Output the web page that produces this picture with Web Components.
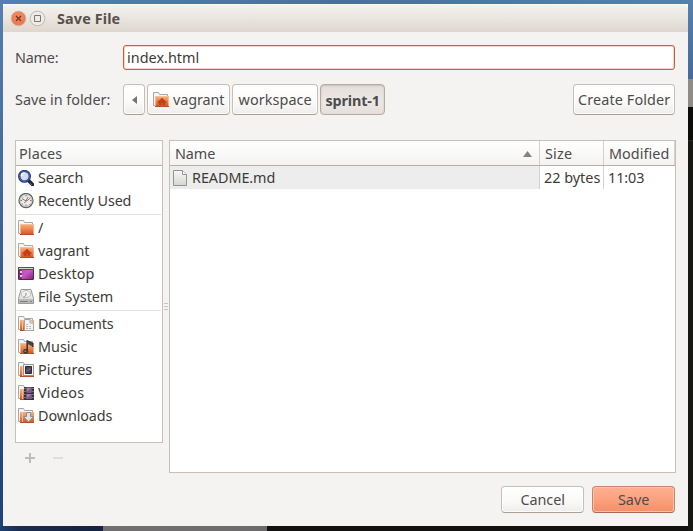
<!DOCTYPE html>
<html lang="en">
<head>
<meta charset="utf-8">
<title>Save File</title>
<style>
html,body{margin:0;width:693px;height:531px;overflow:hidden}
body{font:14.4px/22px "Noto Sans","Open Sans",sans-serif;color:#3c3b37}
</style>
</head>
<body>
<save-dialog></save-dialog>
<script>
const define = (name, html, setup) => {
  const tpl = document.createElement('template');
  tpl.innerHTML = html;
  customElements.define(name, class extends HTMLElement {
    connectedCallback() {
      if (this.shadowRoot) return;
      this.attachShadow({mode: 'open'}).append(tpl.content.cloneNode(true));
      if (setup) setup(this);
    }
  });
};

/* 16px icons */
const folderBack = '<path d="M.5 13.500V.5h5l1 2h8v11z" fill="#f7f6f4" stroke="#aaa8a4"/>';
const folder = folderBack + '<path d="M2 4h14v11H2z" fill="url(#o)"/><path d="M2.500 14V4.500h13V14" fill="none" stroke="#f8c59f" stroke-opacity=".75"/><path d="M2 14.500h14" stroke="#b5502f"/>';
const half = folderBack + '<path d="M2 4h14v11H2z" fill="url(#o)"/><path d="M4.500 4v10" stroke="#f9c39d"/><path d="M2 14.500h14" stroke="#b5502f"/>';
const icons = {
  folder,
  home: folder + '<path d="M9 6l-4.500 4 .8 1 .7-.5V13h2.300v-2h1.500v2H12v-2.500l.7.500.8-1z" fill="#c4401c" stroke="#c4401c" stroke-width=".5"/>',
  search: '<path d="M10.500 10.500l4 4" stroke="#222641" stroke-width="3.500" stroke-linecap="round"/><path d="M12.500 13.500l1 1" stroke="#8b93a8"/><circle cx="6.500" cy="6.300" r="5.300" fill="#d5dce8" stroke="#20377c" stroke-width="2.400"/><circle cx="6.500" cy="6.300" r="5.200" fill="none" stroke="#4e6fbd" stroke-width=".8"/><path d="M3.500 6a3 3 0 0 1 3-3" fill="none" stroke="#fff" stroke-width="1.500"/>',
  recent: '<circle cx="8" cy="7.500" r="7" fill="#eceeea" stroke="#62635f" stroke-width="1.300"/><circle cx="8" cy="7.500" r="5.800" fill="none" stroke="#c3c5bf"/><path d="M8 2v1.500M8 11.500V13M2.500 7.500H4M12 7.500h1.500M4.200 3.700l.8.800M11.500 11l.8.800M4.200 11.300l.8-.8" stroke="#777"/><path d="M3.800 5.500L8 8l2-4" fill="none" stroke="#6b6d69" stroke-width=".9"/><path d="M6 10l6.500-5" stroke="#d94f44" stroke-width=".9"/>',
  desktop: '<rect x=".5" y="1.500" width="15" height="12" rx=".5" fill="url(#p)" stroke="#562650"/><path d="M0 1h16v3H0z" fill="#55544a"/><path d="M1 2h14v1H1z" fill="#d8d9c4"/><path d="M1 4h3v9H1z" fill="#7c3172"/><path d="M2 5h2v2H2zM2 9h2v2H2z" fill="#e8c7e4"/>',
  disk: '<path d="M3 .5h10l2.500 9v5H.5v-5z" fill="url(#g)" stroke="#999b97"/><ellipse cx="8" cy="5" rx="4.800" ry="3.500" fill="#f2f2f1" stroke="#bcbdb9"/><circle cx="8" cy="5" r="1" fill="#aaa"/><path d="M8 6L5.500 9" stroke="#9c9e9a"/><path d="M1 10h14v4H1z" fill="#bbbcb9"/><path d="M2 12.500h8M12 12.500h2" stroke="#7d7e7b"/>',
  documents: half + '<path d="M6.500 3.500h5.500l3.500 3.500v7.500h-9z" fill="#f3f3f2" stroke="#a3a5a1"/><path d="M12 3.500V7h3.500" fill="#ddd" stroke="#aaa"/><path d="M8 8.500h3M8 10.500h6M8 12.500h5" stroke="#bbb" stroke-dasharray="2 1"/>',
  music: folder + '<path d="M9.200 12V2l5.500 2.500V8" fill="none" stroke="#333532" stroke-width="1.500"/><path d="M9.500 2.500v2.500l5 2.500v-3z" fill="#454743"/><ellipse cx="7.700" cy="12.400" rx="2.500" ry="2.300" fill="#353733"/><circle cx="7.400" cy="12.200" r="1" fill="#8b8d88"/>',
  pictures: half + '<path d="M5.500 2.500h10v11h-10z" fill="#f3f3f1" stroke="#96988f"/><path d="M7.500 4.500h6v7h-6z" fill="#493f58" stroke="#2c2936"/><path d="M8 8l5-3v3l-5 2z" fill="#665776"/>',
  videos: half + '<path d="M6 2h10v13H6z" fill="#38333b"/><path d="M8.500 2.500h5v5h-5zM8.500 9h5v5h-5z" fill="#a381b2"/><path d="M9 6.500l4-3.500v4.500H9zM9 13l4-3.500V14H9z" fill="#7d598b"/><path d="M7 3v12M15 3v12" stroke="#bdb5bd" stroke-dasharray="1 2"/>',
  downloads: half + '<path d="M8.500 4.500h4v4h3l-5 5.500-5-5.500h3z" fill="#e2e3e0" stroke="#8d8f89"/>',
  file: '<path d="M1.500.5h9l4 4v11h-13z" fill="url(#g)" stroke="#929490"/><path d="M10.500.5v4h4" fill="#fafafa" stroke="#929490"/>'
};
define('pixel-icon', `<style>:host{display:block;flex:none;width:16px;height:16px}svg{display:block}</style>
<svg width="16" height="16" viewBox="0 0 16 16"><defs>
<linearGradient id="o" x2="0" y2="1"><stop stop-color="#f3b486"/><stop offset=".45" stop-color="#ee8650"/><stop offset="1" stop-color="#d44d1c"/></linearGradient>
<linearGradient id="p" x2="1" y2="1"><stop stop-color="#a444a0"/><stop offset=".5" stop-color="#c95bc4"/><stop offset="1" stop-color="#7c2378"/></linearGradient>
<linearGradient id="g" x2="0" y2="1"><stop stop-color="#f7f7f7"/><stop offset="1" stop-color="#d6d6d5"/></linearGradient></defs><g></g></svg>`,
  el => { el.shadowRoot.querySelector('g').innerHTML = icons[el.getAttribute('name')]; });

/* Text set to a fixed measure by adjusting the tracking */
define('fit-text', `<style>:host{display:block;flex:none;white-space:nowrap}span{display:inline-block}</style><span></span>`,
  el => {
    const span = el.shadowRoot.querySelector('span');
    const text = el.getAttribute('text'), w = +el.getAttribute('w');
    span.textContent = text;
    el.style.width = w + 'px';
    const natural = span.getBoundingClientRect().width;
    if (natural) span.style.letterSpacing = ((w + .3 - natural) / text.length) + 'px';
  });

define('push-button', `<style>
:host{display:flex;box-sizing:border-box;align-items:center;justify-content:center;gap:4px;height:31px;border:1px solid #c6beb7;border-bottom-color:#a89f96;border-radius:4px;background:linear-gradient(#fff,#fbfaf9 55%,#efedeb);box-shadow:inset 0 0 0 1px #fffc;color:#4c4c4c}
:host([active]){background:linear-gradient(#e5dfda,#ece8e4 60%,#e5dfda);border-color:#b5aba3;box-shadow:inset 0 1px 2px #c9c0b9;font-weight:700;padding-top:2px}
:host([action]){height:27px}
:host([primary]){background:linear-gradient(#ffb090,#fba17d 50%,#f58e68);border-color:#c98468;border-bottom-color:#a76b53;box-shadow:inset 0 0 0 1px #ffc1a6}
</style><slot></slot>`);

define('title-bar', `<style>
:host{display:flex;align-items:center;box-sizing:border-box;height:28px;padding:1px 0 0 7px;gap:2px;border-radius:5px 5px 0 0;background:linear-gradient(#f5f3f0,#ebe7e1 45%,#dfd6ce);box-shadow:inset 0 1px #faf9f7;font-weight:700;color:#57504a}
svg{display:block;flex:none}fit-text{margin-left:9px}
</style>
<svg width="17" height="17" viewBox="0 0 17 17"><circle cx="8.500" cy="8.500" r="7.300" fill="#f0774b" stroke="#c8bbb1"/><circle cx="8.500" cy="7" r="5.500" fill="#f69068" opacity=".5"/><path d="M6 6l5 5M11 6l-5 5" stroke="#6b392a" stroke-width="1.300"/></svg>
<svg width="17" height="17" viewBox="0 0 17 17"><circle cx="8.500" cy="8.500" r="7.300" fill="#efebe6" stroke="#beb8b1"/><path d="M5.500 5.500h6v6h-6z" fill="none" stroke="#7d7771"/></svg>
<fit-text text="Save File" w="63"></fit-text>`);

define('place-item', `<style>:host{display:flex;align-items:center;height:23px;padding-left:2px;gap:4px}</style><pixel-icon></pixel-icon><fit-text></fit-text>`,
  el => {
    const r = el.shadowRoot;
    const ic = document.createElement('pixel-icon');
    ic.setAttribute('name', el.getAttribute('icon'));
    const t = document.createElement('fit-text');
    t.setAttribute('text', el.getAttribute('label'));
    t.setAttribute('w', el.getAttribute('w'));
    r.querySelector('pixel-icon').replaceWith(ic);
    r.querySelector('fit-text').replaceWith(t);
  });

define('places-panel', `<style>
:host{display:block;box-sizing:border-box;width:148px;height:303px;border:1px solid #c8c0b8;background:#fff}
header{height:22px;border-bottom:1px solid #b8aea4;background:linear-gradient(#fff,#f4f3f1);padding:2px 0 0 3px;color:#4c4c4c}
hr{border:0;margin:2px 1px 1px;height:1px;background:#e4e1de}
</style>
<header><fit-text text="Places" w="43"></fit-text></header>
<place-item icon="search" label="Search" w="45"></place-item>
<place-item icon="recent" label="Recently Used" w="93"></place-item><hr>
<place-item icon="folder" label="/" w="6"></place-item>
<place-item icon="home" label="vagrant" w="51"></place-item>
<place-item icon="desktop" label="Desktop" w="56"></place-item>
<place-item icon="disk" label="File System" w="75"></place-item><hr>
<place-item icon="documents" label="Documents" w="75"></place-item>
<place-item icon="music" label="Music" w="39"></place-item>
<place-item icon="pictures" label="Pictures" w="54"></place-item>
<place-item icon="videos" label="Videos" w="46"></place-item>
<place-item icon="downloads" label="Downloads" w="74"></place-item>`);

define('file-list', `<style>
:host{display:block;box-sizing:border-box;width:507px;height:333px;border:1px solid #c8c0b8;background:#fff}
.row{display:grid;grid-template-columns:370px 64px 71px;height:23px}
.row>div{display:flex;align-items:center;box-sizing:border-box;border-right:1px solid #d5d0cb;padding-left:4px}
.row>div:first-child{padding-left:2px;gap:4px;background:#ededed}
.row>div:last-child{border:0}
.row.head{height:24px;border-bottom:1px solid #b8aea4;background:linear-gradient(#fff,#f4f3f1);color:#4c4c4c}
.row.head>div{padding:2px 0 0 5px}
.row.head>div:first-child{background:none;padding:2px 7px 0 5px;justify-content:space-between}
.row.head>div:last-child{border-right:1px solid #d5d0cb}
</style>
<div class="row head"><div><fit-text text="Name" w="40"></fit-text><svg width="9" height="6"><path d="M4.500 0L9 6H0z" fill="#85827e"/></svg></div><div><fit-text text="Size" w="27"></fit-text></div><div><fit-text text="Modified" w="60"></fit-text></div></div>
<div class="row"><div><pixel-icon name="file"></pixel-icon><fit-text text="README.md" w="83"></fit-text></div><div><fit-text text="22 bytes" w="56"></fit-text></div><div><fit-text text="11:03" w="36"></fit-text></div></div>`);

define('save-dialog', `<style>
:host{display:grid;box-sizing:border-box;grid-template:4px 522px 5px / 3px 685px 5px;width:693px;height:531px;
background:linear-gradient(90deg,#1f4072,#1a2c50 20px,#15223f 103px,#716f6f 103px,#6c6a6a 267px,#12110f 267px) 0 526px/688px 5px no-repeat,
linear-gradient(90deg,#547fb2,#49719f 50%,#5581b1) 0 0/100% 4px no-repeat,
linear-gradient(#5580b2,#3e659a 40%,#254981 75%,#1f427a) 0 0/3px 100% no-repeat,
linear-gradient(#5581b1,#446a98 79px,#8f8c88 79px,#8f8c88 107px,#0c0c0b 107px,#0c0c0b 140px,#2a2a27 140px,#171813 142px) 688px 0/5px 100% no-repeat}
.win{grid-area:2/2;display:flex;flex-direction:column;background:#f5f3f2;border-radius:5px 5px 0 0;color:#3c3b37}
.body{flex:1;padding:13px 13px 13px 12px;display:flex;flex-direction:column}
.line{display:grid;grid-template-columns:108px 1fr;align-items:center;color:#4c4c4c}
.entry{display:flex;align-items:center;box-sizing:border-box;height:25px;border:1px solid #c95e38;border-radius:3px;background:#fff;box-shadow:inset 0 0 0 1px #f9d3c5;padding-left:3px;color:#3c3b37}
.folders{margin-top:14px}.path{display:flex;gap:2px}.path push-button:last-child{margin-left:auto}
.panels{display:flex;margin-top:25px;width:661px;height:333px}
.left{display:flex;flex-direction:column}
.tools{display:flex;padding:10px 0 0 10px;gap:18px}
.grip{width:6px;height:333px;display:flex;flex-direction:column;align-items:center;justify-content:center;gap:2px}
.grip i{display:block;width:4px;height:1px;background:#c9c4bf}
.actions{display:flex;justify-content:flex-end;gap:8px;margin-top:13px}
</style>
<div class="win"><title-bar></title-bar><div class="body">
<div class="line"><fit-text text="Name:" w="43"></fit-text><div class="entry"><fit-text text="index.html" w="72"></fit-text></div></div>
<div class="line folders"><fit-text text="Save in folder:" w="95"></fit-text><div class="path">
<push-button style="width:22px"><svg width="5" height="8"><path d="M5 0v8L0 4z" fill="#77736f"/></svg></push-button>
<push-button style="width:83px"><pixel-icon name="home"></pixel-icon><fit-text text="vagrant" w="51"></fit-text></push-button>
<push-button style="width:86px"><fit-text text="workspace" w="73"></fit-text></push-button>
<push-button active style="width:65px"><fit-text text="sprint-1" w="54"></fit-text></push-button>
<push-button style="width:102px"><fit-text text="Create Folder" w="92"></fit-text></push-button></div></div>
<div class="panels"><div class="left"><places-panel></places-panel><div class="tools">
<svg width="10" height="10"><path d="M4 0h2v4h4v2H6v4H4V6H0V4h4z" fill="#bdbcbb"/></svg><svg width="10" height="10"><path d="M0 4h10v2H0z" fill="#dfdedd"/></svg></div></div>
<div class="grip"><i></i><i></i><i></i></div><file-list></file-list></div>
<div class="actions"><push-button action style="width:83px"><fit-text text="Cancel" w="44"></fit-text></push-button><push-button action primary style="width:83px"><fit-text text="Save" w="31"></fit-text></push-button></div>
</div></div>`);
</script>
</body>
</html>
